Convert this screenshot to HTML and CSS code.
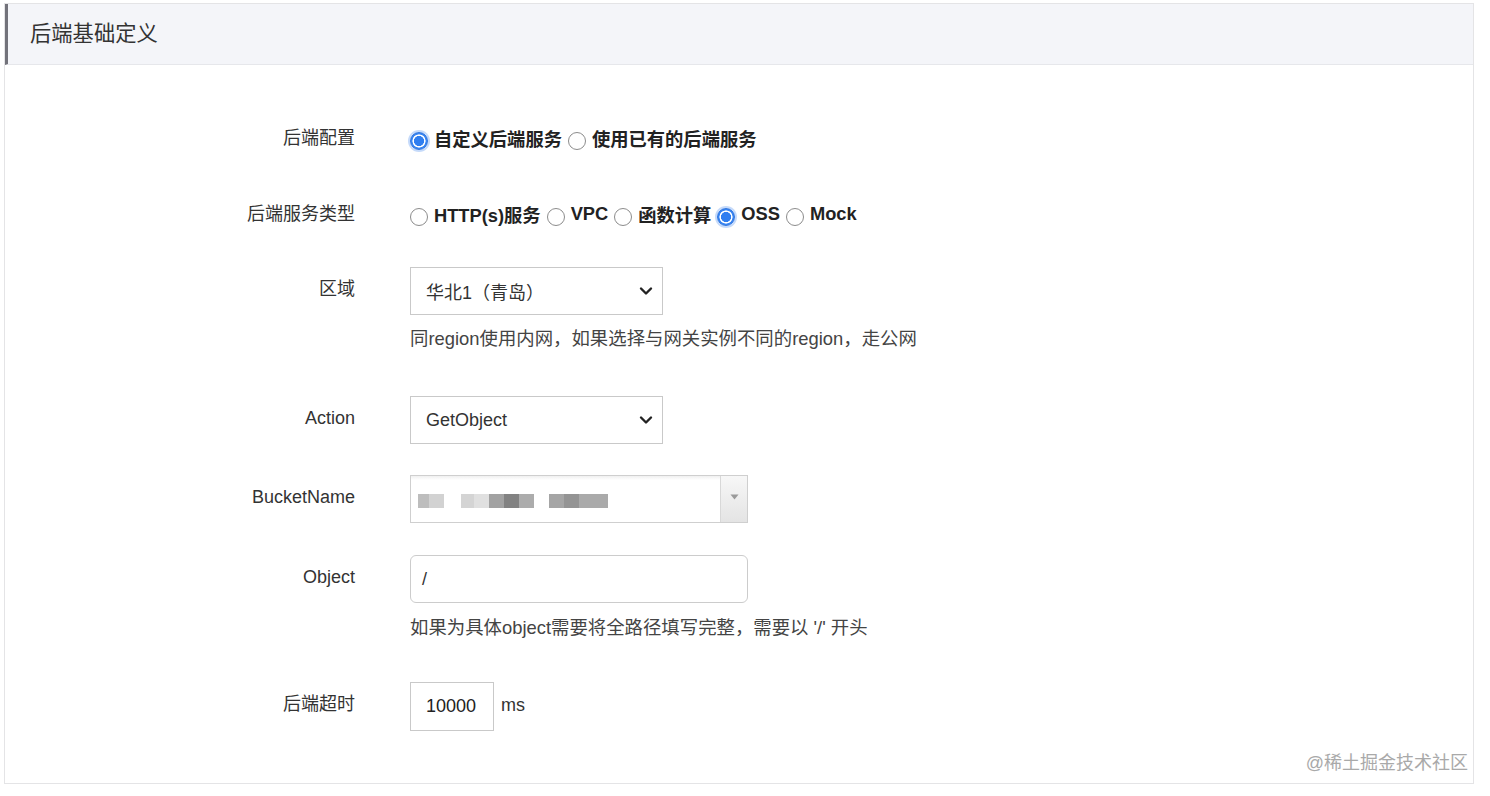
FILE: index.html
```html
<!DOCTYPE html>
<html lang="zh-CN">
<head>
<meta charset="utf-8">
<title>后端基础定义</title>
<link rel="stylesheet" href="styles.css">
</head>
<body>
<div class="panel">
  <div class="panel-header">后端基础定义</div>
  <div class="form">
    <div class="row r1">
      <div class="label">后端配置</div>
      <div class="radios">
        <span class="radio checked"></span><span class="opt">自定义后端服务</span>
        <span class="radio"></span><span class="opt">使用已有的后端服务</span>
      </div>
    </div>
    <div class="row r2">
      <div class="label">后端服务类型</div>
      <div class="radios">
        <span class="radio"></span><span class="opt">HTTP(s)服务</span>
        <span class="radio"></span><span class="opt">VPC</span>
        <span class="radio"></span><span class="opt">函数计算</span>
        <span class="radio checked"></span><span class="opt">OSS</span>
        <span class="radio"></span><span class="opt">Mock</span>
      </div>
    </div>
    <div class="row r3">
      <div class="label label-ctl">区域</div>
      <div class="ctl">
        <div class="select">
          <span>华北1（青岛）</span>
          <svg class="chev" width="14" height="10" viewBox="0 0 14 10"><path d="M2 2.5 L7 7.5 L12 2.5" fill="none" stroke="#222" stroke-width="2.4" stroke-linecap="round" stroke-linejoin="round"/></svg>
        </div>
        <div class="help help1">同region使用内网，如果选择与网关实例不同的region，走公网</div>
      </div>
    </div>
    <div class="row r4">
      <div class="label label-ctl">Action</div>
      <div class="ctl">
        <div class="select">
          <span>GetObject</span>
          <svg class="chev" width="14" height="10" viewBox="0 0 14 10"><path d="M2 2.5 L7 7.5 L12 2.5" fill="none" stroke="#222" stroke-width="2.4" stroke-linecap="round" stroke-linejoin="round"/></svg>
        </div>
      </div>
    </div>
    <div class="row r5">
      <div class="label label-ctl">BucketName</div>
      <div class="ctl">
        <div class="bucket">
          <div class="bucket-val">
            <i class="px" style="width:11px;background:#bdbdbd"></i><i class="px" style="width:15px;background:#d2d2d2"></i><i class="sp" style="width:17px"></i><i class="px" style="width:13px;background:#d4d4d4"></i><i class="px" style="width:15px;background:#e0e0e0"></i><i class="px" style="width:15px;background:#a2a2a2"></i><i class="px" style="width:15px;background:#828282"></i><i class="px" style="width:15px;background:#acacac"></i><i class="sp" style="width:15px"></i><i class="px" style="width:15px;background:#a5a5a5"></i><i class="px" style="width:15px;background:#949494"></i><i class="px" style="width:29px;background:#aaaaaa"></i>
          </div>
          <div class="bucket-arrow"><svg width="9" height="6" viewBox="0 0 9 6"><path d="M0.5 0.5 H8.5 L4.5 5.5 Z" fill="#9a9a9a"/></svg></div>
        </div>
      </div>
    </div>
    <div class="row r6">
      <div class="label label-ctl">Object</div>
      <div class="ctl">
        <div class="input">/</div>
        <div class="help help2">如果为具体object需要将全路径填写完整，需要以 '/' 开头</div>
      </div>
    </div>
    <div class="row r7">
      <div class="label label-ctl">后端超时</div>
      <div class="ctl timeout">
        <div class="num">10000</div>
        <span class="unit">ms</span>
      </div>
    </div>
  </div>
  <div class="watermark">@稀土掘金技术社区</div>
</div>
</body>
</html>
```

FILE: styles.css
```css
* { box-sizing: border-box; }
html, body { margin: 0; background: #fff; }
body {
  padding: 3px 0 0 4px;
  font-family: "Liberation Sans", "Noto Sans CJK SC", sans-serif;
  color: #333;
}
.panel {
  position: relative;
  width: 1470px;
  height: 781px;
  border: 1px solid #e4e4e6;
}
.panel-header {
  height: 61px;
  background: #f4f5f9;
  border-left: 3px solid #72727a;
  border-bottom: 1px solid #e6e7eb;
  padding-left: 22px;
  font-size: 21.3px;
  line-height: 60px;
  color: #333;
}
.form { padding-top: 61px; }
.row {
  display: grid;
  grid-template-columns: 350px 1fr;
  column-gap: 55px;
  align-items: start;
}
.r2 { margin-top: 52px; }
.r3 { margin-top: 41px; }
.r4 { margin-top: 45px; }
.r5 { margin-top: 31px; }
.r6 { margin-top: 32px; }
.r7 { margin-top: 42px; }
.label {
  text-align: right;
  font-size: 18px;
  line-height: 24px;
  color: #333;
}
.label-ctl { padding-top: 10px; }
.radios {
  display: flex;
  align-items: center;
  height: 24px;
  font-size: 18.3px;
  font-weight: bold;
  color: #222;
}
.radio {
  width: 18px;
  height: 18px;
  border-radius: 50%;
  border: 1px solid #8c8c8c;
  background: #fff;
  margin-top: 5px;
  margin-right: 6px;
  flex: none;
}
.radio.checked {
  border: 1px solid #2c74e0;
  background: radial-gradient(circle, #2f7ef0 0 4.8px, #fff 5.3px 6.3px, #3a86f2 6.8px);
  box-shadow: 0 0 0 2px rgba(90, 150, 240, 0.35);
}
.opt { margin-right: 6px; white-space: nowrap; }
.select {
  width: 253px;
  height: 48px;
  border: 1px solid #c9c9c9;
  background: #fff;
  display: flex;
  align-items: center;
  justify-content: space-between;
  padding: 0 9px 0 15px;
  font-size: 18px;
  color: #333;
}
.chev { display: block; }
.help {
  font-size: 18.4px;
  line-height: 24px;
  color: #444;
}
.help1 { margin-top: 12px; }
.help2 { margin-top: 13px; }
.bucket {
  width: 338px;
  height: 48px;
  border: 1px solid #cfcfcf;
  display: flex;
  background: #fff;
}
.bucket-val {
  flex: 1;
  display: flex;
  align-items: center;
  padding-left: 7px;
  padding-top: 3px;
  background: linear-gradient(#f0f0f0 0, #fff 4px);
}
.px { display: block; height: 14px; }
.sp { display: block; height: 14px; }
.bucket-arrow {
  width: 27px;
  border-left: 1px solid #d8d8d8;
  background: linear-gradient(#f7f7f7, #e4e4e4);
  display: flex;
  align-items: flex-start;
  justify-content: center;
  padding-top: 18px;
}
.input {
  width: 338px;
  height: 48px;
  border: 1px solid #cccccc;
  border-radius: 6px;
  padding-left: 11px;
  font-size: 18px;
  line-height: 46px;
  color: #333;
}
.timeout { display: flex; align-items: center; }
.num {
  width: 84px;
  height: 49px;
  border: 1px solid #c9c9c9;
  font-size: 18px;
  line-height: 47px;
  padding-left: 15px;
  color: #222;
}
.unit {
  margin-left: 7px;
  font-size: 18px;
  color: #333;
  margin-top: -3px;
}
.watermark {
  position: absolute;
  right: 5px;
  bottom: 8px;
  font-size: 18px;
  color: #a9a9a9;
  line-height: 24px;
}
```
